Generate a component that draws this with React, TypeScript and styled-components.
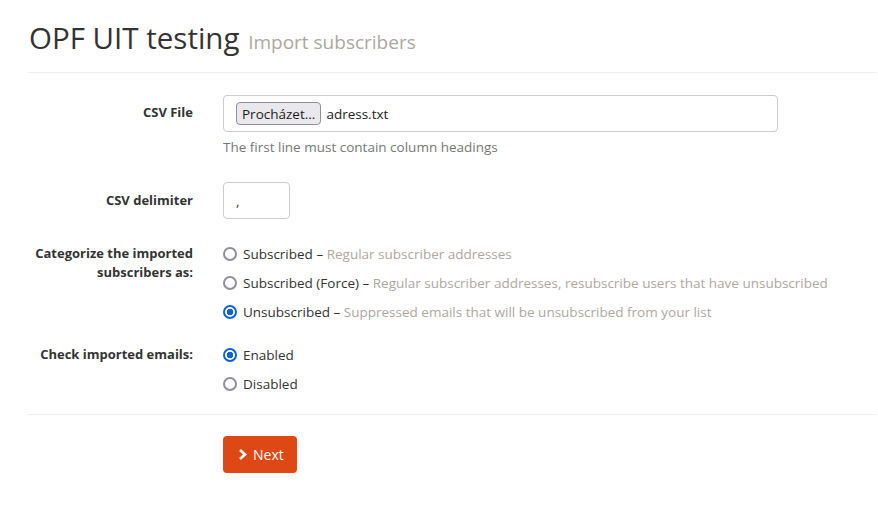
import styled, { createGlobalStyle } from "styled-components";

const GlobalStyle = createGlobalStyle`
  html, body {
    margin: 0;
    padding: 0;
    background: #ffffff;
  }

  body {
    font-family: "Open Sans", "Noto Sans", sans-serif;
    font-size: 13.5px;
    color: #333333;
  }
`;

const Page = styled.div`
  padding: 0 1px 40px 28px;
`;

const Title = styled.h1`
  margin: 0;
  padding: 20px 0 12px 1px;
  font-size: 29.5px;
  font-weight: 400;
  line-height: 36px;
  color: #333333;
`;

const Subtitle = styled.small`
  font-size: 19px;
  color: #aea79f;
  margin-left: 1px;
`;

const Divider = styled.hr`
  margin: 0;
  border: 0;
  border-top: 1px solid #eeeeee;
`;

const Form = styled.form`
  display: flex;
  flex-direction: column;
  padding-top: 22px;
`;

const Group = styled.div<{ $gap: number }>`
  display: grid;
  grid-template-columns: 165px 1fr;
  column-gap: 30px;
  margin-bottom: ${({ $gap }) => $gap}px;
`;

const Label = styled.label<{ $pad: number }>`
  text-align: right;
  font-size: 13px;
  font-weight: 700;
  line-height: 19px;
  padding-top: ${({ $pad }) => $pad}px;
`;

const Control = styled.div`
  display: flex;
  flex-direction: column;
`;

const FileBox = styled.div`
  width: 555px;
  height: 37px;
  box-sizing: border-box;
  border: 1px solid #cccccc;
  border-radius: 4px;
  display: flex;
  align-items: center;
  padding: 0 12px;
  gap: 5px;
`;

const FileButton = styled.span`
  display: inline-flex;
  align-items: center;
  height: 23px;
  box-sizing: border-box;
  padding: 0 5px;
  background: #e9e9ed;
  border: 1px solid #8f8f9d;
  border-radius: 4px;
  color: #1b1b1b;
`;

const FileName = styled.span`
  color: #222222;
`;

const Help = styled.p`
  margin: 5px 0 0;
  line-height: 20px;
  color: #777777;
`;

const TextInput = styled.div`
  width: 67px;
  height: 37px;
  box-sizing: border-box;
  border: 1px solid #cccccc;
  border-radius: 4px;
  padding: 6px 12px;
  line-height: 24px;
  color: #333333;
`;

const RadioRow = styled.label`
  display: flex;
  align-items: center;
  height: 29px;
  white-space: nowrap;
`;

const Radio = styled.input`
  appearance: none;
  margin: 0 6px 0 0;
  width: 14px;
  height: 14px;
  box-sizing: border-box;
  border: 2px solid #8f8f9d;
  border-radius: 50%;
  background: #ffffff;

  &:checked {
    border-color: #0b62d6;
    background: radial-gradient(circle, #0b62d6 0 3px, #ffffff 3.6px);
  }
`;

const Muted = styled.span`
  color: #aea79f;
`;

const Actions = styled.div`
  padding: 21px 0 0 195px;
`;

const PrimaryButton = styled.button`
  display: inline-flex;
  align-items: center;
  gap: 6px;
  height: 37px;
  padding: 0 13px 0 15px;
  border: 0;
  border-radius: 4px;
  background: #dd4814;
  color: #ffffff;
  font-family: inherit;
  font-size: 14px;
`;

const categories = [
  { label: "Subscribed", hint: "Regular subscriber addresses", checked: false },
  {
    label: "Subscribed (Force)",
    hint: "Regular subscriber addresses, resubscribe users that have unsubscribed",
    checked: false,
  },
  {
    label: "Unsubscribed",
    hint: "Suppressed emails that will be unsubscribed from your list",
    checked: true,
  },
];

export default function App() {
  return (
    <Page>
      <GlobalStyle />
      <Title>
        OPF UIT testing <Subtitle>Import subscribers</Subtitle>
      </Title>
      <Divider />
      <Form>
        <Group $gap={25}>
          <Label $pad={8}>CSV File</Label>
          <Control>
            <FileBox>
              <FileButton>Procházet...</FileButton>
              <FileName>adress.txt</FileName>
            </FileBox>
            <Help>The first line must contain column headings</Help>
          </Control>
        </Group>

        <Group $gap={20}>
          <Label $pad={9}>CSV delimiter</Label>
          <Control>
            <TextInput>,</TextInput>
          </Control>
        </Group>

        <Group $gap={14}>
          <Label $pad={5}>Categorize the imported subscribers as:</Label>
          <Control>
            {categories.map((c) => (
              <RadioRow key={c.label}>
                <Radio type="radio" name="status" defaultChecked={c.checked} />
                {c.label}&nbsp;–&nbsp;<Muted>{c.hint}</Muted>
              </RadioRow>
            ))}
          </Control>
        </Group>

        <Group $gap={16}>
          <Label $pad={5}>Check imported emails:</Label>
          <Control>
            <RadioRow>
              <Radio type="radio" name="check" defaultChecked />
              Enabled
            </RadioRow>
            <RadioRow>
              <Radio type="radio" name="check" />
              Disabled
            </RadioRow>
          </Control>
        </Group>

        <Divider />
        <Actions>
          <PrimaryButton type="button">
            <svg width="9" height="11" viewBox="0 0 9 11">
              <path d="M2 1 L7 5.5 L2 10" fill="none" stroke="#ffffff" strokeWidth="2.6" />
            </svg>
            Next
          </PrimaryButton>
        </Actions>
      </Form>
    </Page>
  );
}
